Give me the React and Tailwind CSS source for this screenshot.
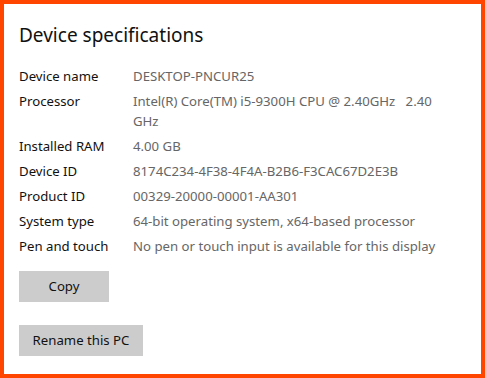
import React from 'react';

const specs = [
  ['Device name', 'DESKTOP-PNCUR25'],
  ['Processor', 'Intel(R) Core(TM) i5-9300H CPU @ 2.40GHz   2.40 GHz'],
  ['Installed RAM', '4.00 GB'],
  ['Device ID', '8174C234-4F38-4F4A-B2B6-F3CAC67D2E3B'],
  ['Product ID', '00329-20000-00001-AA301'],
  ['System type', '64-bit operating system, x64-based processor'],
  ['Pen and touch', 'No pen or touch input is available for this display'],
];

export default function App() {
  return (
    <div
      className="h-[378px] w-[485px] border-4 border-[#ff4500] bg-white pl-[15px] pt-[17px]"
      style={{ fontFamily: '"Noto Sans", sans-serif' }}
    >
      <h1 className="text-[19px] leading-[28px] text-[#111]">Device specifications</h1>

      <div className="mt-[17px] flex flex-col gap-[5px] text-[13.2px] leading-[20px]">
        {specs.map(([label, value]) => (
          <div key={label} className="flex">
            <div className="w-[114px] shrink-0 text-[#111]">{label}</div>
            <div className="w-[320px] whitespace-pre-wrap text-[#666]">{value}</div>
          </div>
        ))}
      </div>

      <button className="mt-[15px] block h-[31px] w-[90px] bg-[#cccccc] text-[13.2px] text-[#111]">
        Copy
      </button>
      <button className="mt-[23px] block h-[31px] w-[124px] bg-[#cccccc] text-[13.2px] text-[#111]">
        Rename this PC
      </button>
    </div>
  );
}
